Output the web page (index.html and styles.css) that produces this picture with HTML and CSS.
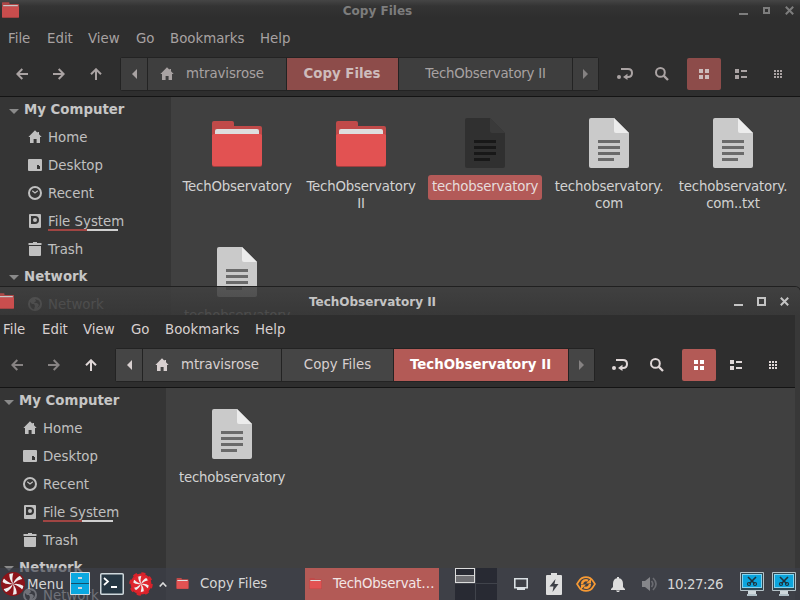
FILE: index.html
```html
<!DOCTYPE html>
<html lang="en">
<head>
<meta charset="utf-8">
<title>Desktop</title>
<link rel="stylesheet" href="styles.css">
</head>
<body>
<svg class="defs" width="0" height="0">
  <symbol id="folder" viewBox="0 0 50 46"><path d="M0 15V2Q0 0 2 0H20Q22 0 22 2V5H48Q50 5 50 7V15Z" fill="#c04a49"/><path d="M3 15V10Q3 8 5 8H45Q47 8 47 10V15Z" fill="#dedede"/><path d="M0 14Q0 13 2 13H48Q50 13 50 14V44Q50 46 48 46H2Q0 46 0 44Z" fill="#a03e3e"/><path d="M0 14Q0 13 2 13H48Q50 13 50 14V43Q50 45 48 45H2Q0 45 0 43Z" fill="#e25252"/></symbol>
  <symbol id="doc" viewBox="0 0 40 50"><path d="M2 0H25L40 15V48Q40 50 38 50H2Q0 50 0 48V2Q0 0 2 0Z" fill="var(--sheet)"/><path d="M25 0L40 15H27Q25 15 25 13Z" fill="var(--fold)"/><path d="M9 22H31V25H9ZM9 28H31V31H9ZM9 34H31V37H9ZM9 40H25V43H9Z" fill="var(--rule)"/></symbol>
  <symbol id="home" viewBox="0 0 14 14"><path d="M7 .3L.4 7H2V13H5.6V9H8.6V13H12V7H13.7L11 4.2V2H9.5V2.8Z" fill="currentColor"/></symbol>
  <symbol id="desktop" viewBox="0 0 14 14"><path fill-rule="evenodd" d="M1 1H13Q14 1 14 2V12Q14 13 13 13H1Q0 13 0 12V2Q0 1 1 1ZM9 7V11H12V8H11V7Z" fill="currentColor"/></symbol>
  <symbol id="recent" viewBox="0 0 14 14"><circle cx="7" cy="7" r="6" fill="none" stroke="currentColor" stroke-width="2"/><path d="M4.3 4.8L7 7L9.8 4.8" fill="none" stroke="currentColor" stroke-width="1.2"/></symbol>
  <symbol id="drive" viewBox="0 0 14 14"><path fill-rule="evenodd" d="M2 0H12Q13 0 13 1V13Q13 14 12 14H2Q1 14 1 13V1Q1 0 2 0ZM3 2V10H7Q11 10 11 6Q11 2 7 2Z" fill="currentColor"/><circle cx="7" cy="6" r="2" fill="currentColor"/></symbol>
  <symbol id="trash" viewBox="0 0 14 14"><path d="M.5 1H5V0H9V1H13.5V3H.5ZM1 4H13V13Q13 14 12 14H2Q1 14 1 13Z" fill="currentColor"/></symbol>
  <symbol id="globe" viewBox="0 0 14 14"><path fill-rule="evenodd" d="M7 0A7 7 0 1 1 7 14A7 7 0 1 1 7 0ZM2 5L4 7H6L7 9L6 12.5Q1.5 11 2 5ZM7 2L8 4L6 6L9 6L11 8L9 11Q14 8 11 3.5Z" fill="currentColor"/></symbol>
  <symbol id="tri" viewBox="0 0 10 5"><path d="M0 0H10L5 5Z" fill="#8a8a8a"/></symbol>
  <symbol id="back" viewBox="0 0 12 12"><path d="M12 6H1.6M6.3 1L1.3 6L6.3 11" fill="none" stroke="currentColor" stroke-width="2"/></symbol>
  <symbol id="fwd" viewBox="0 0 12 12"><path d="M0 6H10.4M5.7 1L10.7 6L5.7 11" fill="none" stroke="currentColor" stroke-width="2"/></symbol>
  <symbol id="up" viewBox="0 0 12 12"><path d="M6 12V1.6M1 6.3L6 1.3L11 6.3" fill="none" stroke="currentColor" stroke-width="2"/></symbol>
  <symbol id="left" viewBox="0 0 5 10"><path d="M5 0V10L0 5Z" fill="currentColor"/></symbol>
  <symbol id="right" viewBox="0 0 5 10"><path d="M0 0V10L5 5Z" fill="currentColor"/></symbol>
  <symbol id="toggle" viewBox="0 0 16 12"><circle cx="2" cy="9" r="2" fill="currentColor"/><path d="M4 1H11Q15 1 15 5Q15 9 11 9H9" fill="none" stroke="currentColor" stroke-width="2"/><path d="M10.5 5.8V12L6 9Z" fill="currentColor"/></symbol>
  <symbol id="search" viewBox="0 0 14 14"><circle cx="5.4" cy="5.4" r="4.4" fill="none" stroke="currentColor" stroke-width="2"/><path d="M8.6 8.6L13 13" stroke="currentColor" stroke-width="2.3"/></symbol>
  <symbol id="grid" viewBox="0 0 10 10"><path d="M0 0H4V4H0ZM6 0H10V4H6ZM0 6H4V10H0ZM6 6H10V10H6Z" fill="currentColor"/></symbol>
  <symbol id="list" viewBox="0 0 12 10"><path d="M0 0H4V4H0ZM6 1H12V3H6ZM0 6H4V10H0ZM6 7H12V9H6Z" fill="currentColor"/></symbol>
  <symbol id="compact" viewBox="0 0 8 8"><path d="M0 0H2V2H0ZM3 0H5V2H3ZM6 0H8V2H6ZM0 3H2V5H0ZM3 3H5V5H3ZM6 3H8V5H6ZM0 6H2V8H0ZM3 6H5V8H3ZM6 6H8V8H6Z" fill="currentColor"/></symbol>
  <symbol id="min" viewBox="0 0 9 9"><path d="M0 7H9V9H0Z" fill="currentColor"/></symbol>
  <symbol id="close" viewBox="0 0 9 9"><path d="M.8 .8L8.2 8.2M8.2 .8L.8 8.2" stroke="currentColor" stroke-width="2"/></symbol>
  <symbol id="candy" viewBox="0 0 24 24"><circle cx="12" cy="12" r="11" fill="#f0eeee"/><g fill="var(--candy)"><path id="blade" d="M12 12Q10.5 6 12.5 .5Q17 .5 19.500 3.500Q14 6 12 12Z"/><use href="#blade" transform="rotate(60 12 12)"/><use href="#blade" transform="rotate(120 12 12)"/><use href="#blade" transform="rotate(180 12 12)"/><use href="#blade" transform="rotate(240 12 12)"/><use href="#blade" transform="rotate(300 12 12)"/></g><circle cx="12" cy="12" r="11.300" fill="none" stroke="var(--candy)" stroke-width="1.200"/></symbol>
  <symbol id="monitor" viewBox="0 0 24 24"><path d="M8 19H16V23H8Z" fill="#cfd8dc"/><path d="M7 22H17V24H7Z" fill="#b0bec5"/><path d="M.5 .5H23.500V18.500H.5Z" fill="#2d4752" stroke="#b6c3c9"/><path d="M2 2H22V16H2Z" fill="#0ba5dd"/><path d="M2.500 2.500H21.500V15.500H2.500Z" fill="none" stroke="#fff" stroke-dasharray="1 1"/><path d="M8 5L14.500 11.500M16 5L9.500 11.500" stroke="#20323b" stroke-width="1.600"/><circle cx="9" cy="12" r="1.500" fill="none" stroke="#20323b" stroke-width="1.200"/><circle cx="15" cy="12" r="1.500" fill="none" stroke="#20323b" stroke-width="1.200"/></symbol>
</svg>

<main class="desk">
  <section class="window back">
    <header class="titlebar">
      <svg class="app"><use href="#folder"/></svg>
      <h1>Copy Files</h1>
      <div class="controls"><svg class="w9"><use href="#min"/></svg><i class="max small"></i><svg class="w9"><use href="#close"/></svg></div>
    </header>
    <nav class="menu"><span class="m1">File</span><span class="m2">Edit</span><span class="m3">View</span><span class="m4">Go</span><span class="m5">Bookmarks</span><span>Help</span></nav>
    <div class="toolbar">
      <div class="arrows"><svg class="w12"><use href="#back"/></svg><svg class="w12"><use href="#fwd"/></svg><svg class="w12"><use href="#up"/></svg></div>
      <div class="path">
        <span class="edge"><svg class="w5"><use href="#left"/></svg></span>
        <span class="root"><svg class="w14"><use href="#home"/></svg>mtravisrose</span>
        <span class="mid active">Copy Files</span>
        <span class="last">TechObservatory II</span>
        <span class="edge end"><svg class="w5"><use href="#right"/></svg></span>
      </div>
      <div class="tools"><svg class="toggle"><use href="#toggle"/></svg><svg class="w14 find"><use href="#search"/></svg><span class="view"><svg class="w10"><use href="#grid"/></svg></span><svg class="list"><use href="#list"/></svg><svg class="w8"><use href="#compact"/></svg></div>
    </div>
    <div class="body">
      <aside>
        <h2><svg class="tri"><use href="#tri"/></svg>My Computer</h2>
        <p><svg class="w14"><use href="#home"/></svg>Home</p>
        <p><svg class="w14"><use href="#desktop"/></svg>Desktop</p>
        <p><svg class="w14"><use href="#recent"/></svg>Recent</p>
        <p><svg class="w14"><use href="#drive"/></svg><span class="disk">File System</span></p>
        <p><svg class="w14"><use href="#trash"/></svg>Trash</p>
        <h2><svg class="tri"><use href="#tri"/></svg>Network</h2>
        <p><svg class="w14"><use href="#globe"/></svg>Network</p>
      </aside>
      <div class="files">
        <figure><svg class="fold"><use href="#folder"/></svg><figcaption>TechObservatory</figcaption></figure>
        <figure><svg class="fold"><use href="#folder"/></svg><figcaption>TechObservatory<br>II</figcaption></figure>
        <figure class="selected"><svg class="doc"><use href="#doc"/></svg><figcaption>techobservatory</figcaption></figure>
        <figure><svg class="doc"><use href="#doc"/></svg><figcaption>techobservatory.<br>com</figcaption></figure>
        <figure><svg class="doc"><use href="#doc"/></svg><figcaption>techobservatory.<br>com..txt</figcaption></figure>
        <figure><svg class="doc"><use href="#doc"/></svg><figcaption>techobservatory</figcaption></figure>
      </div>
    </div>
  </section>

  <section class="window front">
    <header class="titlebar">
      <svg class="app"><use href="#folder"/></svg>
      <h1>TechObservatory II</h1>
      <div class="controls"><svg class="w9"><use href="#min"/></svg><i class="max"></i><svg class="w9"><use href="#close"/></svg></div>
    </header>
    <div class="frame">
    <nav class="menu"><span class="m1">File</span><span class="m2">Edit</span><span class="m3">View</span><span class="m4">Go</span><span class="m5">Bookmarks</span><span>Help</span></nav>
    <div class="toolbar">
      <div class="arrows"><svg class="w12 off"><use href="#back"/></svg><svg class="w12 off"><use href="#fwd"/></svg><svg class="w12"><use href="#up"/></svg></div>
      <div class="path">
        <span class="edge"><svg class="w5"><use href="#left"/></svg></span>
        <span class="root"><svg class="w14"><use href="#home"/></svg>mtravisrose</span>
        <span class="mid">Copy Files</span>
        <span class="last active">TechObservatory II</span>
        <span class="edge end"><svg class="w5"><use href="#right"/></svg></span>
      </div>
      <div class="tools"><svg class="toggle"><use href="#toggle"/></svg><svg class="w14 find"><use href="#search"/></svg><span class="view"><svg class="w10"><use href="#grid"/></svg></span><svg class="list"><use href="#list"/></svg><svg class="w8"><use href="#compact"/></svg></div>
    </div>
    <div class="body">
      <aside>
        <h2><svg class="tri"><use href="#tri"/></svg>My Computer</h2>
        <p><svg class="w14"><use href="#home"/></svg>Home</p>
        <p><svg class="w14"><use href="#desktop"/></svg>Desktop</p>
        <p><svg class="w14"><use href="#recent"/></svg>Recent</p>
        <p><svg class="w14"><use href="#drive"/></svg><span class="disk">File System</span></p>
        <p><svg class="w14"><use href="#trash"/></svg>Trash</p>
        <h2><svg class="tri"><use href="#tri"/></svg>Network</h2>
        <p><svg class="w14"><use href="#globe"/></svg>Network</p>
      </aside>
      <div class="files">
        <figure><svg class="doc"><use href="#doc"/></svg><figcaption>techobservatory</figcaption></figure>
      </div>
    </div>
    </div>
  </section>

  <footer class="panel">
    <div class="start"><svg class="mint"><use href="#candy"/></svg><span>Menu</span></div>
    <svg class="cabinet" viewBox="0 0 20 24"><path d="M.5 .5H19.500V22.500H.5Z" fill="#0ba8e0" stroke="#d4dde2"/><path d="M1 11H19V12H1Z" fill="#14506b"/><path d="M8 5H12V7H8ZM8 15H12V17H8Z" fill="#cfd8dc"/></svg>
    <svg class="term" viewBox="0 0 24 22"><rect x=".75" y=".75" width="22.500" height="20.500" rx="1" fill="#263743" stroke="#cfd8dc" stroke-width="1.500"/><path d="M4 5L8 8.500L4 12" fill="none" stroke="#fff" stroke-width="1.700"/><path d="M11 13H17V15H11Z" fill="#fff"/></svg>
    <svg class="gear" viewBox="0 0 24 24"><circle cx="12" cy="12" r="10.500" fill="#d9232b" stroke="#d9232b" stroke-width="2.500" stroke-dasharray="4 4.250"/><use href="#candy" x="3" y="3" width="18" height="18"/></svg>
    <svg class="caret" viewBox="0 0 8 5"><path d="M.7 4.500L4 1L7.300 4.500" fill="none" stroke="#dcdcdc" stroke-width="1.600"/></svg>
    <div class="task"><svg class="mini"><use href="#folder"/></svg>Copy Files</div>
    <div class="task current"><svg class="mini"><use href="#folder"/></svg>TechObservat…</div>
    <div class="pager"><i class="here"></i><i></i><i></i><i></i></div>
    <div class="tray">
      <svg class="net" viewBox="0 0 14 13"><path d="M.8 .8H13.200V9.700H.8Z" fill="none" stroke="#d9dfe3" stroke-width="1.600"/><path d="M3 10H11V12H3Z" fill="#d9dfe3"/></svg>
      <svg class="bat" viewBox="0 0 16 22"><path d="M5 0H11V2H15Q16 2 16 3V21Q16 22 15 22H1Q0 22 0 21V3Q0 2 1 2H5Z" fill="#dedede"/><path d="M9.500 6L3.500 13.500H7.500L6.500 19L12.500 11H8.500Z" fill="#3c3f46"/></svg>
      <svg class="sync" viewBox="0 0 20 18"><path d="M3 6A8 7.600 0 0 1 17 6L19 9L17 12A8 7.600 0 0 1 3 12L1 9Z" fill="none" stroke="#f79a34" stroke-width="1.700"/><path d="M6 9A4 4 0 0 1 12 5.700M14 9A4 4 0 0 1 8 12.300" fill="none" stroke="#f79a34" stroke-width="2.400"/><path d="M10 8.500H15V3.500ZM10 9.500H5V14.500Z" fill="#f79a34"/></svg>
      <svg class="bell" viewBox="0 0 14 15"><path d="M6 0H8V1.300Q12 2 12 7V10L14 12V13H0V12L2 10V7Q2 2 6 1.300ZM5 13.500H9L8 15H6Z" fill="#dedede"/></svg>
      <svg class="vol" viewBox="0 0 16 14"><path d="M0 4H3L8 0V14L3 10H0Z" fill="#85868a"/><path d="M9.500 4Q12 7 9.500 10M11 1Q17 7 11 13" fill="none" stroke="#6b6c72" stroke-width="1.700"/></svg>
      <span class="clock">10:27:26</span>
      <svg class="mon"><use href="#monitor"/></svg>
      <svg class="mon"><use href="#monitor"/></svg>
    </div>
  </footer>
</main>
</body>
</html>
```
FILE: styles.css
```css
* { box-sizing: border-box; }
body { margin: 0; background: #2e2e2e; font: 13.33px/17px "DejaVu Sans", sans-serif; }
h1, h2, p, figure { margin: 0; }
svg { display: block; flex: none; }
.defs { position: absolute; }
.desk { position: relative; width: 800px; height: 600px; overflow: hidden; }

.window { position: absolute; display: flex; flex-direction: column; --sheet: #cacaca; --fold: #ececec; --rule: #6a6a6a; }
.back { left: 0; top: -4px; width: 800px; height: 604px; --fg: #a8a2a2; --title: #7d7d7d; --accent: #8d4c4a; --accentfg: #cdbcbc; --seg: #3e3e3e; --icon: #aaa3a3; }
.front { left: -5px; top: 287px; width: 805px; height: 330px; --fg: #d8d0d0; --title: #c4c4c4; --accent: #b35a56; --accentfg: #fff; --seg: #454545; --icon: #e0d8d8; border-radius: 0 5px 0 0; box-shadow: 0 0 0 1px #202020; }
.frame { width: 805px; flex: 1; display: flex; flex-direction: column; border-right: 5px solid #383838; }

.titlebar { height: 28px; flex: none; display: flex; align-items: center; padding-left: 2px; color: var(--title); }
.back .titlebar { background: linear-gradient(#454545 4px, #343434 10px, #2e2e2e 22px); }
.front .titlebar { background: linear-gradient(rgba(64,64,64,.85), rgba(55,55,55,.87)); border-radius: 0 5px 0 0; }
.app { width: 17px; height: 16px; opacity: .86; }
.titlebar h1 { width: 717px; text-align: center; font-size: 12px; line-height: 16px; font-weight: bold; padding-top: 1px; }
.controls { display: flex; align-items: center; margin-left: 3px; width: 55px; justify-content: space-between; }
.max { width: 9px; height: 9px; border: 2px solid var(--title); }
.small { width: 7px; height: 7px; }

.menu { height: 28px; flex: none; display: flex; align-items: center; padding-left: 8px; color: var(--fg); background: #2e2e2e; }
.m1 { width: 39px; } .m2 { width: 41px; } .m3 { width: 48px; } .m4 { width: 34px; } .m5 { width: 90px; }
.toolbar { height: 45px; flex: none; display: flex; align-items: center; background: #2e2e2e; border-bottom: 1px solid #141414; color: var(--icon); }
.arrows { width: 104px; margin-left: 16px; display: flex; gap: 25px; }
.off { opacity: .5; }
.path { height: 34px; display: flex; gap: 1px; padding: 1px; background: #232323; border-radius: 3px; }
.path span { display: flex; align-items: center; justify-content: center; padding-bottom: 2px; background: var(--seg); color: var(--fg); }
.path svg { margin-top: 2px; }
.path .edge { width: 26px; }
.path .end { width: 25px; color: #858282; }
.path .root { width: 138px; gap: 12px; padding-right: 10px; letter-spacing: -.1px; }
.path .mid { width: 111px; }
.path .last { width: 173px; letter-spacing: -.22px; }
.path .active { background: var(--accent); color: var(--accentfg); font-weight: bold; letter-spacing: 0; padding-right: 1px; }
.front .path .last { width: 174px; letter-spacing: 0; }
.tools { display: flex; align-items: center; margin-left: 18px; }
.front .tools { margin-left: 17px; }
.view { width: 34px; height: 32px; margin: 0 14px 0 18px; border-radius: 2px; display: flex; align-items: center; justify-content: center; background: var(--accent); color: var(--accentfg); }
.find { margin-left: 22px; }
.list { width: 12px; height: 10px; margin-right: 27px; }
.toggle { width: 16px; height: 12px; }
.w5 { width: 5px; height: 10px; } .w8 { width: 8px; height: 8px; } .w9 { width: 9px; height: 9px; }
.w10 { width: 10px; height: 10px; } .w12 { width: 12px; height: 12px; } .w14 { width: 14px; height: 14px; }

.body { flex: 1; min-height: 0; display: flex; background: #404040; }
aside { width: 171px; flex: none; background: #353535; color: #c6c6c6; overflow: hidden; }
aside h2 { height: 27px; display: flex; align-items: center; gap: 5px; padding: 0 0 1px 9px; font-size: 13.33px; }
aside h2:first-child { height: 26px; }
aside p { height: 28px; display: flex; align-items: center; gap: 6px; padding-left: 28px; color: #c0c0c0; }
.tri { width: 10px; height: 5px; margin-top: 3px; }
.disk { position: relative; }
.disk::after { content: ""; position: absolute; left: 0; bottom: -1px; width: 70px; height: 2px; background: linear-gradient(90deg, #a04543 39px, #cfcfcf 39px); }
.files { display: grid; grid-template-columns: repeat(5, 124px); grid-auto-rows: 129px; padding: 21px 0 0 4px; color: #d2d2d2; }
figure { display: flex; flex-direction: column; align-items: center; }
figcaption { margin-top: 7px; padding: 3px 4px 5px; text-align: center; border-radius: 3px; white-space: nowrap; letter-spacing: -.2px; }
.doc { width: 40px; height: 50px; }
.fold { width: 50px; height: 46px; margin: 3px 0 1px; }
.selected { --sheet: #303030; --fold: #3a3a3a; --rule: #181818; }
.selected figcaption { background: #b35a58; color: #e6dcdc; }

.panel { position: absolute; left: 0; top: 568px; width: 800px; height: 32px; display: flex; align-items: center; background: rgba(62,65,76,.62); color: #d6d6d6; }
.panel > *, .tray > * { flex: none; }
.start { width: 70px; display: flex; align-items: center; gap: 2px; padding-left: 1px; }
.mint { width: 24px; height: 24px; --candy: #8d1419; }
.cabinet { width: 20px; height: 24px; margin-right: 10px; }
.term { width: 24px; height: 22px; margin-right: 5px; }
.gear { width: 24px; height: 24px; margin-right: 6px; --candy: #e0262e; }
.caret { width: 8px; height: 5px; margin-right: 5px; }
.task { width: 133px; height: 32px; display: flex; align-items: center; gap: 11px; padding: 0 0 1px 4px; white-space: nowrap; }
.mini { width: 13px; height: 11px; }
.task.current { width: 134px; background: #b35a56; color: #f2e6e6; letter-spacing: -.2px; }
.pager { width: 42px; height: 32px; margin: 0 17px 0 16px; display: grid; grid-template: 15px 16px / 20px 21px; gap: 1px; background: #40434b; }
.pager i { background: #282a33; }
.pager .here { border: 1px solid #dcdcdc; background: linear-gradient(#282a33 6px, #c8c8c8 6px 7px, #6f6f73 7px); }
.tray { display: flex; align-items: center; }
.net { width: 14px; height: 13px; margin-right: 18px; }
.bat { width: 16px; height: 22px; margin-right: 14px; }
.sync { width: 20px; height: 18px; margin-right: 15px; }
.bell { width: 14px; height: 15px; margin-right: 17px; }
.vol { width: 16px; height: 14px; margin-right: 9px; }
.clock { width: 73px; letter-spacing: -.5px; }
.mon { width: 24px; height: 24px; margin-right: 8px; }
```
